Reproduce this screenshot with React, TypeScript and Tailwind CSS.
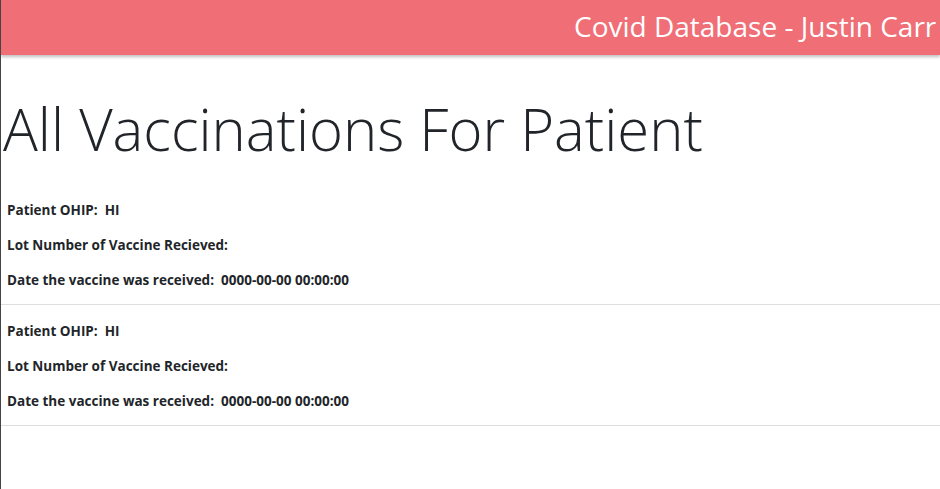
const records = [
  { ohip: "HI", lot: "", date: "0000-00-00 00:00:00" },
  { ohip: "HI", lot: "", date: "0000-00-00 00:00:00" },
];

function Row({ label, value }: { label: string; value: string }) {
  return (
    <div className="h-[35px] flex items-center text-[13.5px] font-bold text-[#212529] whitespace-pre">
      {label}
      {value ? "  " + value : ""}
    </div>
  );
}

export default function App() {
  return (
    <div className="min-h-[489px] bg-white border-l border-[#444] font-['Open_Sans',sans-serif] overflow-hidden">
      <header className="h-[55px] bg-[#f06e75] shadow-[0_2px_3px_rgba(0,0,0,0.25)] overflow-hidden whitespace-nowrap pl-[573px] pt-[6px]">
        <span className="text-white text-[28px] leading-[40px]">Covid Database - Justin Carr</span>
      </header>
      <h1 className="mt-[39px] text-[#212529] text-[58px] font-light leading-[70px] pl-[2px]">
        All Vaccinations For Patient
      </h1>
      <div className="mt-[20px]">
        {records.map((r, i) => (
          <div key={i} className="border-b border-[#dedede]">
            <div className="pl-[6px] pt-[9px] pb-[6px]">
              <Row label="Patient OHIP:" value={r.ohip} />
              <Row label="Lot Number of Vaccine Recieved:" value={r.lot} />
              <Row label="Date the vaccine was received:" value={r.date} />
            </div>
          </div>
        ))}
      </div>
    </div>
  );
}
